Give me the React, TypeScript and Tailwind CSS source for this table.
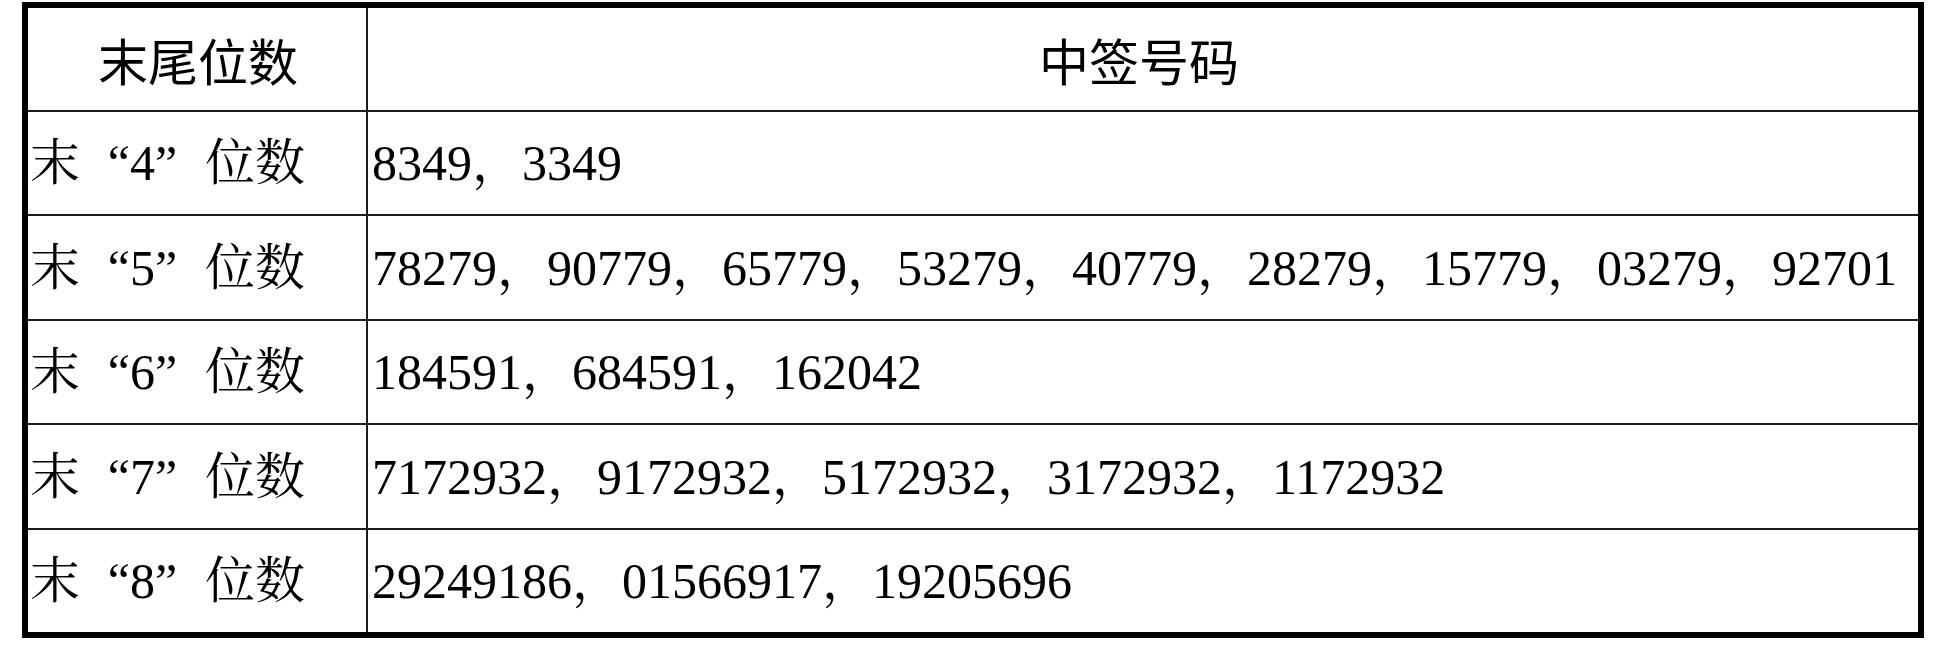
const rows = [
  { digit: '4', codes: ['8349', '3349'], h: 'h-[104px]' },
  {
    digit: '5',
    codes: ['78279', '90779', '65779', '53279', '40779', '28279', '15779', '03279', '92701'],
    h: 'h-[105px]',
  },
  { digit: '6', codes: ['184591', '684591', '162042'], h: 'h-[104px]' },
  { digit: '7', codes: ['7172932', '9172932', '5172932', '3172932', '1172932'], h: 'h-[105px]' },
  { digit: '8', codes: ['29249186', '01566917', '19205696'], h: 'h-[104px]' },
];

const serif = "font-['Liberation_Serif','Noto_Serif_CJK_SC','Noto_Sans_CJK_SC',serif]";

export default function App() {
  return (
    <div className="min-h-screen bg-white pt-[2px] pl-[22px] text-black">
      <div className="w-[1902px] border-[6px] border-black bg-white">
        <div className="flex h-[102px] font-['Noto_Sans_CJK_SC',sans-serif] text-[50px] leading-none">
          <div className="flex w-[340px] items-center justify-center border-r-2 border-[#1c1c1c] pl-[2px]">
            末尾位数
          </div>
          <div className="flex flex-1 items-center justify-center pr-[8px]">中签号码</div>
        </div>

        {rows.map((row) => (
          <div
            key={row.digit}
            className={`flex border-t-2 border-[#1c1c1c] ${row.h} ${serif} text-[50px] leading-none whitespace-nowrap`}
          >
            <div className="flex w-[340px] items-center border-r-2 border-[#1c1c1c] pl-[2px]">
              <span>末</span>
              <span className="inline-block w-[50px] text-right">“</span>
              <span>{row.digit}</span>
              <span className="inline-block w-[50px] text-left">”</span>
              <span>位数</span>
            </div>
            <div className="flex flex-1 items-center pl-[4px]">
              {row.codes.map((code, i) => (
                <span key={code}>
                  {code}
                  {i < row.codes.length - 1 && '，'}
                </span>
              ))}
            </div>
          </div>
        ))}
      </div>
    </div>
  );
}
